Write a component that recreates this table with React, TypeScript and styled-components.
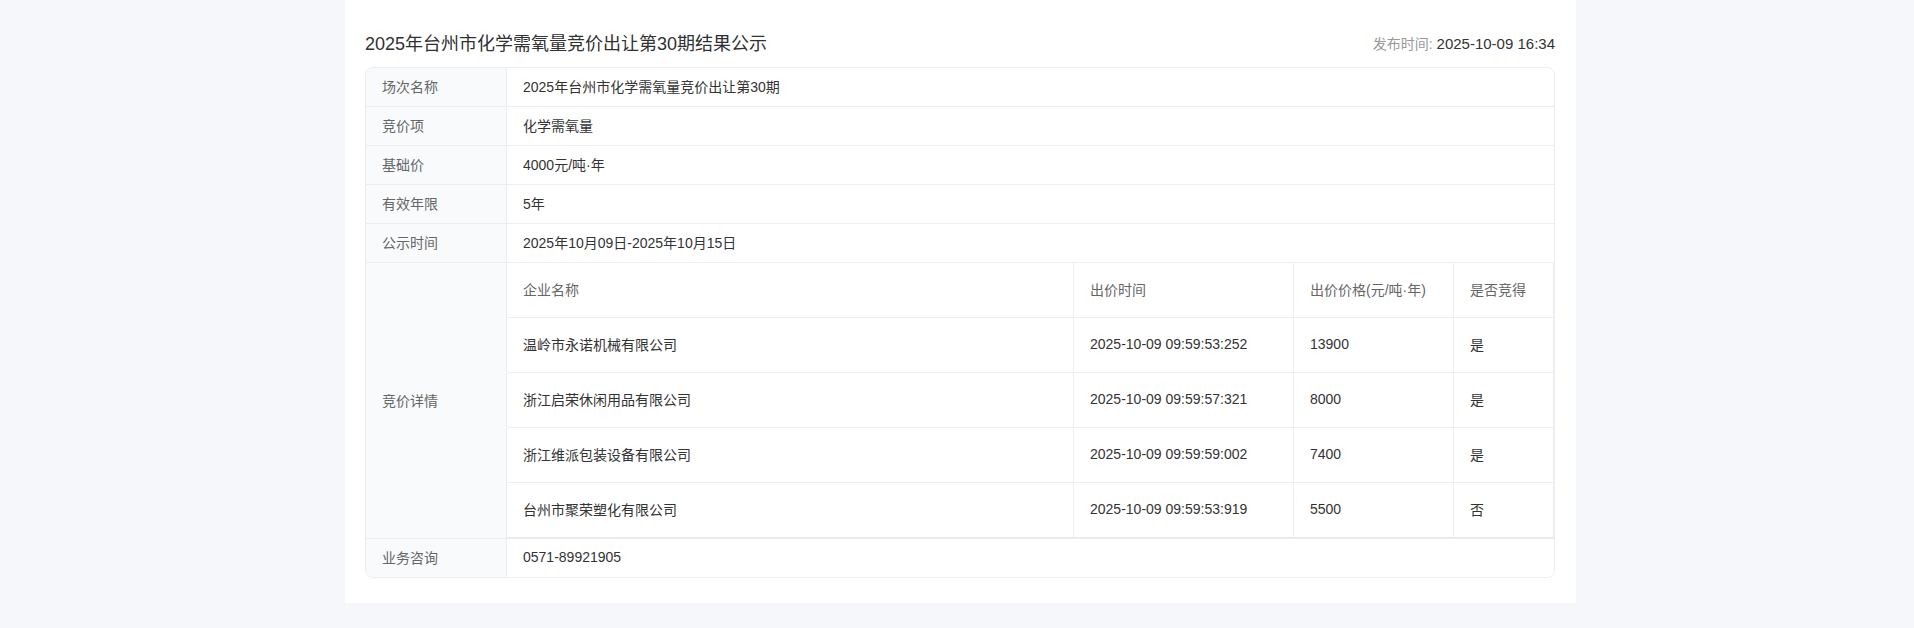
import React from "react";
import styled, { createGlobalStyle } from "styled-components";

const GlobalStyle = createGlobalStyle`
  html, body { margin: 0; padding: 0; }
  body {
    background: #f6f7fb;
    font-family: "Liberation Sans", "Noto Sans CJK SC", sans-serif;
    color: #333;
  }
`;

const Page = styled.div`
  min-height: 628px;
  display: flex;
  justify-content: center;
  align-items: flex-start;
  padding-left: 7px;
  box-sizing: border-box;
`;

const Card = styled.div`
  width: 1231px;
  background: #fff;
  padding: 0 21px 25px 20px;
  box-sizing: border-box;
`;

const Header = styled.div`
  display: flex;
  justify-content: space-between;
  align-items: center;
  padding-top: 30px;
  margin-bottom: 9px;
  line-height: 28px;
`;

const Title = styled.h1`
  margin: 0;
  font-size: 18px;
  font-weight: 400;
  color: #303133;
`;

const Published = styled.div`
  font-size: 14px;
  color: #999;
`;

const PublishedValue = styled.span`
  color: #333;
  font-size: 15px;
`;

const Table = styled.div`
  border: 1px solid #ebeef2;
  border-radius: 8px;
  overflow: hidden;
`;

const Row = styled.div<{ $last?: boolean }>`
  display: grid;
  grid-template-columns: 141px 1fr;
  border-bottom: ${(p) => (p.$last ? "none" : "1px solid #ebeef2")};
`;

const Label = styled.div`
  background: #f9fafc;
  border-right: 1px solid #ebeef2;
  padding: 0 0 2px 16px;
  box-sizing: border-box;
  display: flex;
  align-items: center;
  min-height: 38px;
  font-size: 14px;
  color: #666;
`;

const Value = styled.div`
  padding: 0 0 2px 16px;
  box-sizing: border-box;
  display: flex;
  align-items: center;
  min-height: 38px;
  font-size: 14px;
  color: #333;
`;

const DetailCell = styled.div`
  display: flex;
  flex-direction: column;
`;

const Inner = styled.div`
  border-right: 1px solid #ebeef2;
  border-bottom: 1px solid #e6e9ee;
`;

const InnerRow = styled.div<{ $last?: boolean }>`
  display: grid;
  grid-template-columns: 1fr 220px 160px 99px;
  border-bottom: ${(p) => (p.$last ? "none" : "1px solid #ebeef2")};
`;

const InnerCell = styled.div<{ $head?: boolean }>`
  height: 54px;
  box-sizing: border-box;
  display: flex;
  align-items: center;
  padding: 0 0 2px 16px;
  font-size: 14px;
  color: ${(p) => (p.$head ? "#666" : "#333")};
  border-right: 1px solid #ebeef2;
  &:last-child { border-right: none; }
`;

const info: [string, string][] = [
  ["场次名称", "2025年台州市化学需氧量竞价出让第30期"],
  ["竞价项", "化学需氧量"],
  ["基础价", "4000元/吨·年"],
  ["有效年限", "5年"],
  ["公示时间", "2025年10月09日-2025年10月15日"],
];

const heads = ["企业名称", "出价时间", "出价价格(元/吨·年)", "是否竞得"];

const bids = [
  ["温岭市永诺机械有限公司", "2025-10-09 09:59:53:252", "13900", "是"],
  ["浙江启荣休闲用品有限公司", "2025-10-09 09:59:57:321", "8000", "是"],
  ["浙江维派包装设备有限公司", "2025-10-09 09:59:59:002", "7400", "是"],
  ["台州市聚荣塑化有限公司", "2025-10-09 09:59:53:919", "5500", "否"],
];

export default function App() {
  return (
    <>
      <GlobalStyle />
      <Page>
        <Card>
          <Header>
            <Title>2025年台州市化学需氧量竞价出让第30期结果公示</Title>
            <Published>
              发布时间: <PublishedValue>2025-10-09 16:34</PublishedValue>
            </Published>
          </Header>
          <Table>
            {info.map(([k, v]) => (
              <Row key={k}>
                <Label>{k}</Label>
                <Value>{v}</Value>
              </Row>
            ))}
            <Row>
              <Label>竞价详情</Label>
              <DetailCell>
                <Inner>
                  <InnerRow>
                    {heads.map((h) => (
                      <InnerCell $head key={h}>
                        {h}
                      </InnerCell>
                    ))}
                  </InnerRow>
                  {bids.map((b, i) => (
                    <InnerRow key={b[0]} $last={i === bids.length - 1}>
                      {b.map((c, j) => (
                        <InnerCell key={j}>{c}</InnerCell>
                      ))}
                    </InnerRow>
                  ))}
                </Inner>
              </DetailCell>
            </Row>
            <Row $last>
              <Label>业务咨询</Label>
              <Value>0571-89921905</Value>
            </Row>
          </Table>
        </Card>
      </Page>
    </>
  );
}
